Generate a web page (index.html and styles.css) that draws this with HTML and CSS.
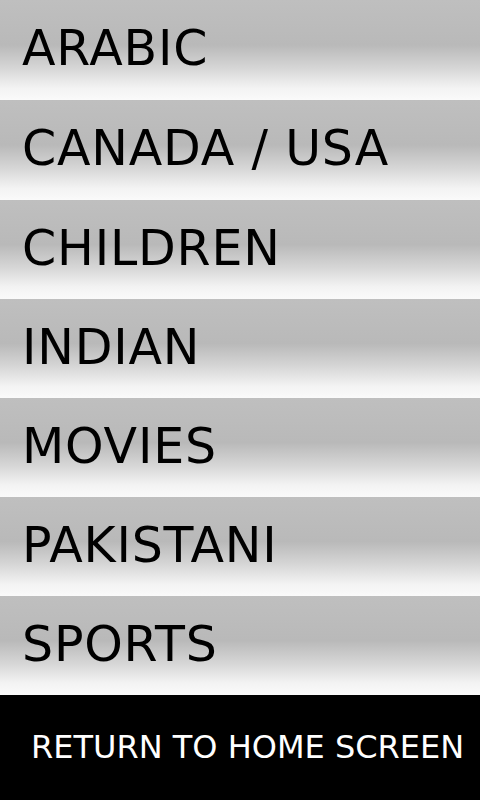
FILE: index.html
```html
<!DOCTYPE html>
<html lang="en">
<head>
    <meta charset="UTF-8">
    <meta name="viewport" content="width=device-width, initial-scale=1.0">
    <title>Channels</title>
    <link rel="stylesheet" href="styles.css">
</head>
<body>
    <div class="categories">
        <div class="category">ARABIC</div>
        <div class="category">CANADA / USA</div>
        <div class="category">CHILDREN</div>
        <div class="category">INDIAN</div>
        <div class="category">MOVIES</div>
        <div class="category">PAKISTANI</div>
        <div class="category">SPORTS</div>
    </div>
    <div class="footer">RETURN TO HOME SCREEN</div>
</body>
</html>
```

FILE: styles.css
```css
body {
    margin: 0;
    padding: 0;
    font-family: 'DejaVu Sans', Verdana, sans-serif;
    background-color: #000;
}
.categories {
    display: grid;
    grid-template-rows: 100px 100px 99px 99px 99px 99px 99px;
    height: 695px;
}
.category {
    box-sizing: border-box;
    padding: 20px 0 0 22px;
    font-size: 49px;
    letter-spacing: 0.8px;
    color: #000;
    background: linear-gradient(#bfbfbf 0%, #b9b9b9 45%, #d6d6d6 68%, #f3f3f3 88%, #fafafa 100%);
    cursor: pointer;
}
.footer {
    box-sizing: border-box;
    height: 105px;
    padding: 33px 0 0 31px;
    font-size: 32px;
    color: #fff;
    background-color: #000;
}
```
